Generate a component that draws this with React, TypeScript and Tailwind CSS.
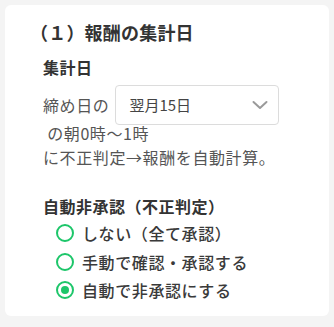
import React from "react";

const font = { fontFamily: '"Noto Sans CJK JP", "Noto Sans", sans-serif' };

function Radio({ checked, label }: { checked?: boolean; label: string }) {
  return (
    <div className="flex items-center h-[28.5px]">
      <span className="w-[18px] h-[18px] rounded-full border-[2.5px] border-[#1dc66a] flex items-center justify-center shrink-0">
        {checked && <span className="w-[8px] h-[8px] rounded-full bg-[#1dc66a]" />}
      </span>
      <span className="ml-[8px] text-[16px] leading-[24px] font-medium text-[#3a3a3a] tracking-[0.6px]">{label}</span>
    </div>
  );
}

export default function App() {
  return (
    <div className="min-h-screen bg-[#f4f4f4] pt-[5px] pl-[5px] pr-[5px]" style={font}>
      <div className="bg-white rounded-[6px] pl-[25px] pt-[14px] h-[311px]">
        <h2 className="text-[18px] leading-[26px] font-bold text-[#333] tracking-[0.2px]">（１）報酬の集計日</h2>
        <div className="pl-[13px]">
          <h3 className="mt-[10px] text-[16px] leading-[24px] font-bold text-[#333] tracking-[0.5px]">集計日</h3>
          <div className="mt-[6px] flex items-center">
            <span className="text-[16px] leading-[24px] text-[#555] tracking-[0.6px]">締め日の</span>
            <div className="ml-[6px] w-[164px] h-[40px] border border-[#dcdcdc] rounded-[4px] flex items-center justify-between pl-[13px] pr-[8px]">
              <span className="text-[15px] text-[#444]">翌月15日</span>
              <svg width="20" height="20" viewBox="0 0 20 20" fill="none">
                <path d="M3.5 7 L10 13 L16.5 7" stroke="#9a9a9a" strokeWidth="2" strokeLinecap="round" strokeLinejoin="round" />
              </svg>
            </div>
          </div>
          <div className="-mt-[4px] text-[16px] leading-[24px] text-[#555] tracking-[0.6px]">
            <div>&nbsp;の朝0時〜1時</div>
            <div>に不正判定→報酬を自動計算。</div>
          </div>
          <h3 className="mt-[25px] text-[16px] leading-[24px] font-bold text-[#333] tracking-[0.5px]">自動非承認（不正判定）</h3>
          <div className="mt-[1px] pl-[13px]">
            <Radio label="しない（全て承認）" />
            <Radio label="手動で確認・承認する" />
            <Radio checked label="自動で非承認にする" />
          </div>
        </div>
      </div>
    </div>
  );
}
